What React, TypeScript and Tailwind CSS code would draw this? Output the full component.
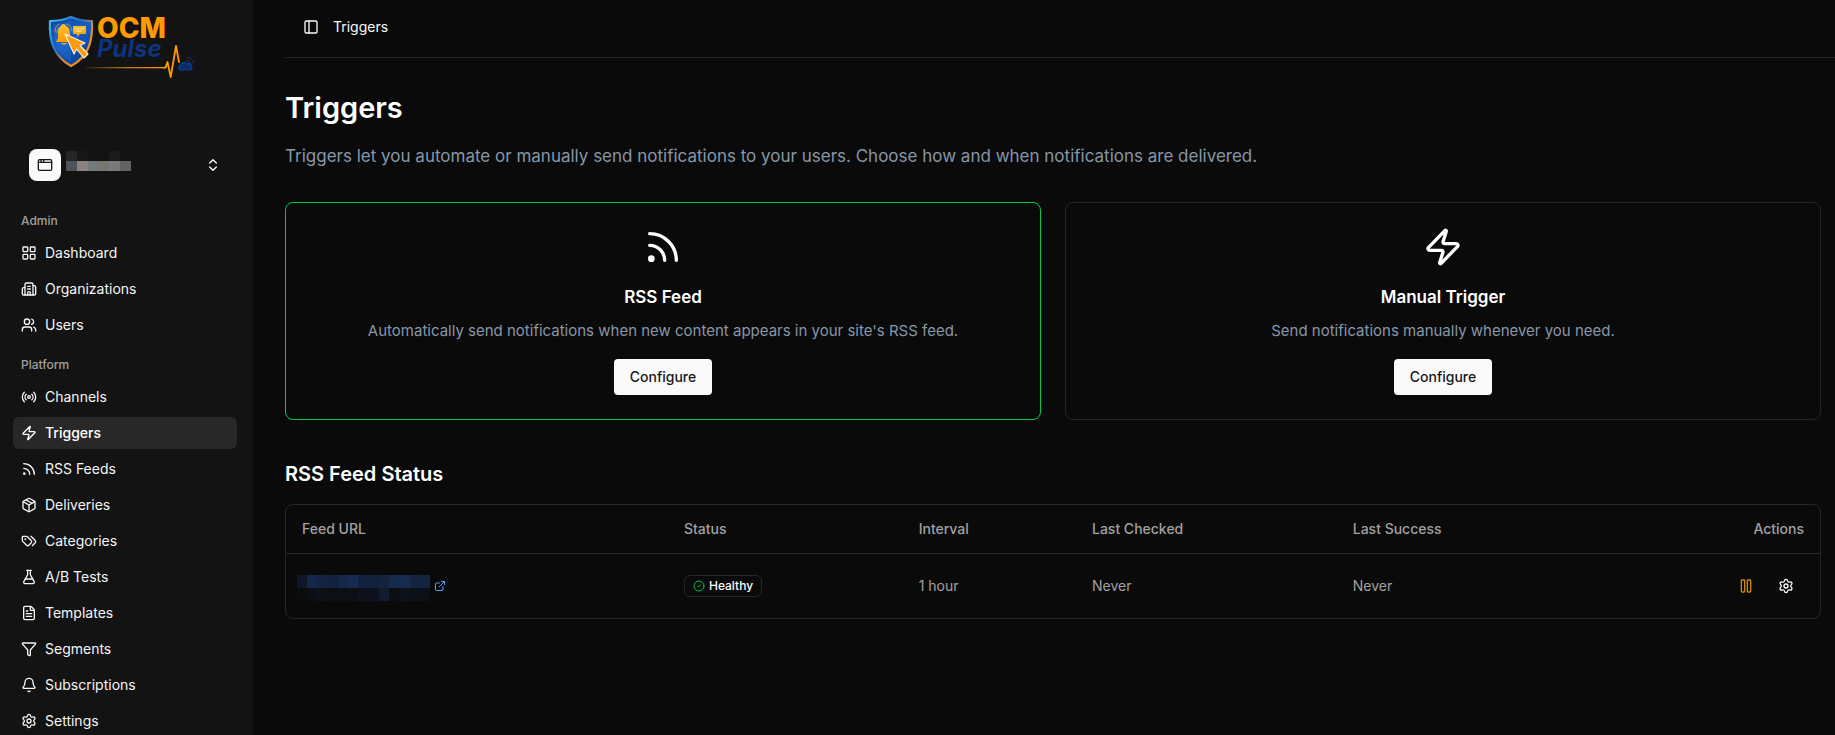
import type { ReactNode } from 'react';
import {
  AppWindow,
  Bell,
  Building2,
  ChevronsUpDown,
  CircleCheck,
  ExternalLink,
  FileText,
  FlaskConical,
  Funnel,
  LayoutGrid,
  Package,
  PanelLeft,
  Pause,
  Radio,
  Rss,
  Settings,
  Users,
  Zap,
} from 'lucide-react';
import type { ComponentType } from 'react';

type Icon = ComponentType<{ className?: string }>;
type NavItem = { label: string; icon: Icon; active?: boolean };

function TagPair({ className }: { className?: string }) {
  return (
    <svg viewBox="0 0 24 24" fill="none" stroke="currentColor" strokeWidth="2" strokeLinecap="round" strokeLinejoin="round" className={className} aria-hidden="true">
      <path d="m15 5 6.3 6.3a2.4 2.4 0 0 1 0 3.4L17 19" />
      <path d="M9.586 5.586A2 2 0 0 0 8.172 5H3a1 1 0 0 0-1 1v5.172a2 2 0 0 0 .586 1.414L8.290 18.290a2.426 2.426 0 0 0 3.420 0l3.580-3.580a2.426 2.426 0 0 0 0-3.420z" />
      <circle cx="6.500" cy="9.500" r=".5" fill="currentColor" />
    </svg>
  );
}

const adminItems: NavItem[] = [
  { label: 'Dashboard', icon: LayoutGrid },
  { label: 'Organizations', icon: Building2 },
  { label: 'Users', icon: Users },
];

const platformItems: NavItem[] = [
  { label: 'Channels', icon: Radio },
  { label: 'Triggers', icon: Zap, active: true },
  { label: 'RSS Feeds', icon: Rss },
  { label: 'Deliveries', icon: Package },
  { label: 'Categories', icon: TagPair },
  { label: 'A/B Tests', icon: FlaskConical },
  { label: 'Templates', icon: FileText },
  { label: 'Segments', icon: Funnel },
  { label: 'Subscriptions', icon: Bell },
  { label: 'Settings', icon: Settings },
];

function Logo() {
  return (
    <svg viewBox="45 12 152 68" className="h-[68px] w-[152px]" role="img" aria-label="OCM Pulse">
      <defs>
        <linearGradient id="rim" x1="0" y1="0" x2="1" y2="1">
          <stop offset="0" stopColor="#3cc0f5" />
          <stop offset="0.4" stopColor="#2a6fc0" />
          <stop offset="0.6" stopColor="#d98a3a" />
          <stop offset="1" stopColor="#ff9800" />
        </linearGradient>
        <linearGradient id="field" x1="0" y1="0" x2="0.6" y2="1">
          <stop offset="0" stopColor="#0c3c96" />
          <stop offset="0.5" stopColor="#1560c4" />
          <stop offset="1" stopColor="#0c3f9c" />
        </linearGradient>
        <linearGradient id="trail" x1="0" y1="0" x2="1" y2="0">
          <stop offset="0" stopColor="#ff9800" stopOpacity="0.1" />
          <stop offset="0.5" stopColor="#e08a20" stopOpacity="0.8" />
          <stop offset="1" stopColor="#ff9800" />
        </linearGradient>
        <linearGradient id="gold" x1="0" y1="0" x2="0" y2="1">
          <stop offset="0" stopColor="#ffc02e" />
          <stop offset="1" stopColor="#ff9a00" />
        </linearGradient>
      </defs>
      <path d="M71 17 C64 20 57 21 50 21 C49 40 53 56 71 66 C88 57 93 42 92 21 C84 21 78 20 71 17Z" fill="url(#field)" stroke="url(#rim)" strokeWidth="2.200" strokeLinejoin="round" />
      <path d="M71 20 C65 23 59 24 53 24 C53 41 57 54 71 62Z" fill="#2c86e6" opacity="0.25" />
      <path d="M63 24 C65 24 66 25 66 26 C69 27 70 30 70 34 V38 L72 42 H56 L58 38 V33 C58 29 59 27 61 26 C61 25 62 24 63 24Z" fill="url(#gold)" />
      <path d="M61 43 H67 C67 45 61 45 61 43Z" fill="#ffa000" />
      <path d="M55 32 C55 28 56 26 59 24 M57 33 C57 30 58 28 60 27 M67 24 C70 25 72 28 72 31" fill="none" stroke="#d9a441" strokeWidth="0.800" strokeLinecap="round" />
      <path d="M74 26 H85 Q86 26 86 27 V33 Q86 34 85 34 H80 L77 37 V34 H74 Q73 34 73 33 V27 Q73 26 74 26Z" fill="url(#gold)" />
      <path d="M75.500 28.700 H83.500 M75.500 31.200 H81.500" stroke="#fff0c8" strokeWidth="0.900" />
      <path d="M65 34 L85 43 L80 45.500 L88 54 L84 58 L76.500 49 L74 54Z" fill="#ff9b08" stroke="#fff2df" strokeWidth="1.100" strokeLinejoin="round" />
      <text x="97" y="38" fontFamily="Inter, sans-serif" fontSize="28" fontWeight="800" fill="#ff9a00">OCM</text>
      <text x="97" y="57" fontFamily="Inter, sans-serif" fontSize="24" fontWeight="700" fontStyle="italic" fill="#0c347f">Pulse</text>
      <rect x="86" y="67" width="79" height="1.300" fill="url(#trail)" />
      <path d="M164 67.600 H165.500 L167.500 62 L170.700 77 L176 46 L179 62" fill="none" stroke="#ff9a00" strokeWidth="1.800" strokeLinejoin="round" strokeLinecap="round" />
      <path d="M180 70 A2.600 2.600 0 0 1 180 65.500 A4 4 0 0 1 187 64 A3 3 0 0 1 190 70Z" fill="#0d2d68" stroke="#0d3f93" strokeWidth="1.200" strokeLinejoin="round" />
      <path d="M187 60 Q190 60.500 190.500 63.500 M188 57.500 Q193 58.500 193.500 63" fill="none" stroke="#0f3576" strokeWidth="1" strokeLinecap="round" />
    </svg>
  );
}

function NavGroup({ title, items }: { title: string; items: NavItem[] }) {
  return (
    <section>
      <h2 className="flex h-8 items-center px-2 text-xs font-medium text-[#a1a1a1]">{title}</h2>
      <ul className="flex flex-col gap-1">
        {items.map(({ label, icon: ItemIcon, active }) => (
          <li key={label}>
            <a
              href="#"
              aria-current={active ? 'page' : undefined}
              className={
                active
                  ? 'flex h-8 items-center gap-2 rounded-md bg-[#282828] px-2 text-sm font-medium text-white'
                  : 'flex h-8 items-center gap-2 rounded-md px-2 text-sm text-neutral-100'
              }
            >
              <ItemIcon className="size-4 shrink-0" />
              {label}
            </a>
          </li>
        ))}
      </ul>
    </section>
  );
}

function TriggerCard({ icon: CardIcon, title, text, selected }: { icon: Icon; title: string; text: string; selected?: boolean }) {
  return (
    <article
      className={
        selected
          ? 'flex flex-col items-center rounded-lg border border-[#00c950] p-6 text-center'
          : 'flex flex-col items-center rounded-lg border border-[#262626] p-6 text-center'
      }
    >
      <CardIcon className="size-10 text-white" />
      <h2 className="mt-4 text-[17px] leading-7 font-semibold text-white">{title}</h2>
      <p className="mt-2 text-[15px] leading-6 text-[#8797a8]">{text}</p>
      <button type="button" className="mt-4 h-9 rounded-sm bg-neutral-50 px-4 text-sm font-medium text-neutral-900">
        Configure
      </button>
    </article>
  );
}

function Head({ children, className }: { children: ReactNode; className: string }) {
  return (
    <th scope="col" className={className}>
      {children}
    </th>
  );
}

const siteTiles = [
  '#242628', '#191715', '#131313', '#131313', '#1b1b1b', '#131313',
  '#4d5358', '#8a8380', '#727a7e', '#77776f', '#7b797b', '#636262',
];

const urlTiles = [
  '#0d1726', '#152849', '#142544', '#12213c', '#15284b', '#172b52', '#12213d', '#12213c', '#14243d', '#152a4c', '#162c4e', '#14263f', '#14263f',
  '#0b0c0e', '#0b0e14', '#0c1018', '#0c0f15', '#0c0f17', '#0c0f17', '#0e121d', '#0e121e', '#101c31', '#0b0e13', '#0d111c', '#0c1019', '#0c1019',
];

export default function App() {
  return (
    <div className="flex h-screen overflow-hidden bg-[#0a0a0a] font-['Inter','Liberation_Sans',sans-serif] text-neutral-50">
      <aside className="flex w-[253px] shrink-0 flex-col overflow-hidden bg-[#131313] pr-4 pl-[13px]">
        <a href="#" className="mt-3 ml-8 shrink-0 self-start">
          <Logo />
        </a>
        <button type="button" aria-label="Switch site" className="mt-[61px] flex h-12 shrink-0 items-center gap-[5px] px-4 text-left">
          <span className="flex size-8 items-center justify-center rounded-lg bg-neutral-50 text-neutral-900">
            <AppWindow className="size-4" />
          </span>
          <span className="mb-2 grid w-[65px] grid-cols-6">
            {siteTiles.map((color, i) => (
              <span key={i} className="h-[10px]" style={{ backgroundColor: color }} />
            ))}
          </span>
          <ChevronsUpDown className="ml-auto size-4" />
        </button>
        <nav className="mt-4 flex flex-col gap-2" aria-label="Main">
          <NavGroup title="Admin" items={adminItems} />
          <NavGroup title="Platform" items={platformItems} />
        </nav>
      </aside>

      <main className="min-w-0 flex-1 pl-8">
        <header className="flex h-[58px] items-center gap-2 border-b border-[#232323] pb-1 pl-3">
          <button type="button" aria-label="Toggle sidebar" className="flex size-7 items-center justify-center">
            <PanelLeft className="size-4" />
          </button>
          <span className="text-sm">Triggers</span>
        </header>

        <div className="pr-[14px]">
          <h1 className="mt-8 text-[29px] leading-9 font-semibold text-white">Triggers</h1>
          <p className="mt-4 text-[17px] leading-7 text-[#8797a8]">
            Triggers let you automate or manually send notifications to your users. Choose how and when notifications are delivered.
          </p>

          <div className="mt-8 grid grid-cols-2 gap-6">
            <TriggerCard icon={Rss} title="RSS Feed" text="Automatically send notifications when new content appears in your site's RSS feed." selected />
            <TriggerCard icon={Zap} title="Manual Trigger" text="Send notifications manually whenever you need." />
          </div>

          <h2 className="mt-10 text-xl leading-7 font-semibold text-white">RSS Feed Status</h2>
          <div className="mt-4 overflow-hidden rounded-lg border border-[#262626]">
            <table className="w-full table-fixed text-left text-sm text-[#a1a1a1]">
              <thead>
                <tr className="h-12 border-b border-[#262626]">
                  <Head className="w-[24.9%] px-4 font-medium">Feed URL</Head>
                  <Head className="w-[15.3%] px-4 font-medium">Status</Head>
                  <Head className="w-[11.3%] px-4 font-medium">Interval</Head>
                  <Head className="w-[17%] px-4 font-medium">Last Checked</Head>
                  <Head className="px-4 font-medium">Last Success</Head>
                  <Head className="px-4 text-right font-medium">Actions</Head>
                </tr>
              </thead>
              <tbody>
                <tr className="h-[65px]">
                  <td className="px-[11px]">
                    <a href="#" aria-label="Open feed" className="flex items-center gap-1 text-[#51a2ff]">
                      <span className="mt-1 grid w-[133px] grid-cols-13">
                        {urlTiles.map((color, i) => (
                          <span key={i} className="h-[13px]" style={{ backgroundColor: color }} />
                        ))}
                      </span>
                      <ExternalLink className="size-3" />
                    </a>
                  </td>
                  <td className="px-4">
                    <span className="inline-flex h-[22px] items-center gap-1 rounded-md border border-[#262626] px-2 text-xs font-medium text-neutral-50">
                      <CircleCheck className="size-3 text-[#00c950]" />
                      Healthy
                    </span>
                  </td>
                  <td className="px-4">1 hour</td>
                  <td className="px-4">Never</td>
                  <td className="px-4">Never</td>
                  <td className="px-4">
                    <div className="flex justify-end gap-1">
                      <button type="button" aria-label="Pause feed" className="flex h-8 w-9 items-center justify-center text-[#d08700]">
                        <Pause className="size-4" />
                      </button>
                      <button type="button" aria-label="Feed settings" className="flex h-8 w-9 items-center justify-center text-neutral-50">
                        <Settings className="size-4" />
                      </button>
                    </div>
                  </td>
                </tr>
              </tbody>
            </table>
          </div>
        </div>
      </main>
    </div>
  );
}
